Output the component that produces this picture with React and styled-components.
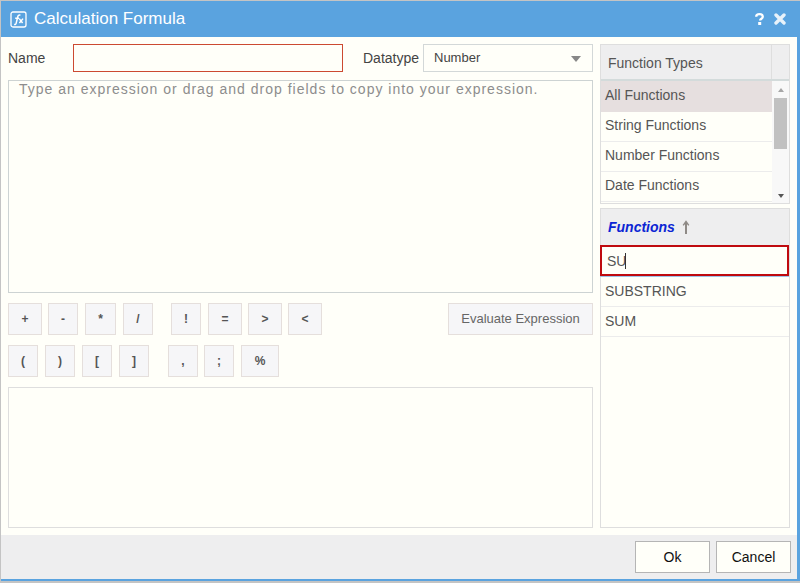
import React from "react";
import styled, { createGlobalStyle } from "styled-components";

const GlobalStyle = createGlobalStyle`
  html, body {
    margin: 0;
    padding: 0;
    background: #e4e4e4;
  }
  * {
    box-sizing: border-box;
  }
`;

const Frame = styled.div`
  width: 800px;
  height: 583px;
  padding: 1px 0 2px 1px;
  background: #c4c4c4;
  font-family: "Liberation Sans", Arial, sans-serif;
  overflow: hidden;
`;

const Dialog = styled.div`
  height: 580px;
  width: 799px;
  display: flex;
  flex-direction: column;
  background: #fffff9;
  border-right: 3px solid #5aa3df;
  border-bottom: 2px solid #5aa3df;
`;

const TitleBar = styled.div`
  height: 36px;
  flex: none;
  display: flex;
  align-items: center;
  padding: 0 11px 0 9px;
  background: #5aa3df;
  color: #fff;
`;

const TitleText = styled.span`
  margin-left: 7px;
  font-size: 17px;
  flex: 1;
`;

const TitleActions = styled.div`
  display: flex;
  align-items: center;
  gap: 10px;
`;

const Body = styled.div`
  flex: 1;
  display: flex;
  gap: 7px;
  padding: 7px 7px 7px 7px;
  min-height: 0;
`;

const LeftColumn = styled.div`
  width: 585px;
  display: flex;
  flex-direction: column;
`;

const NameRow = styled.div`
  display: flex;
  align-items: center;
  height: 28px;
  margin-bottom: 8px;
  font-size: 14px;
  color: #444;
`;

const NameLabel = styled.label`
  width: 65px;
`;

const NameInput = styled.input`
  width: 270px;
  height: 28px;
  border: 1px solid #cc4a32;
  background: #fffff9;
  outline: none;
`;

const DatatypeLabel = styled.label`
  margin-left: 20px;
  width: 60px;
`;

const Select = styled.div`
  width: 170px;
  height: 28px;
  display: flex;
  align-items: center;
  justify-content: space-between;
  padding: 0 11px 2px 10px;
  border: 1px solid #d3d8d8;
  font-size: 13px;
  color: #444;
`;

const Caret = styled.span`
  width: 0;
  height: 0;
  margin-top: 3px;
  border-left: 5.5px solid transparent;
  border-right: 5.5px solid transparent;
  border-top: 6px solid #888;
`;

const Expression = styled.div`
  height: 213px;
  padding: 0 10px;
  border: 1px solid #cdd3d3;
  font-size: 14px;
  letter-spacing: 1px;
  color: #8d8d8d;
`;

const ButtonRow = styled.div`
  display: flex;
  height: 32px;
  margin-top: 10px;
`;

const OpButton = styled.button`
  width: ${(p) => p.$w}px;
  height: 32px;
  margin-left: ${(p) => p.$ml}px;
  padding: 0;
  border: 1px solid #e5dfdc;
  background: #f6f6f8;
  font-family: "Liberation Sans", Arial, sans-serif;
  font-size: 12px;
  font-weight: bold;
  color: #555;
`;

const EvaluateButton = styled.button`
  margin-left: auto;
  width: 145px;
  height: 32px;
  padding: 0 0 2px;
  border: 1px solid #e5dfdc;
  background: #f6f6f8;
  font-family: "Liberation Sans", Arial, sans-serif;
  font-size: 13px;
  color: #666;
`;

const ResultBox = styled.div`
  flex: 1;
  margin-top: 10px;
  border: 1px solid #dedede;
`;

const RightColumn = styled.div`
  width: 190px;
  display: flex;
  flex-direction: column;
  font-size: 14px;
  color: #555;
`;

const TypesPanel = styled.div`
  height: 160px;
  flex: none;
  border: 1px solid #dedede;
  display: flex;
  flex-direction: column;
`;

const TypesHeader = styled.div`
  height: 36px;
  flex: none;
  display: flex;
  background: #eeeeef;
  border-bottom: 2px solid #d3dbdb;
`;

const TypesTitle = styled.div`
  width: 171px;
  padding: 2px 0 0 7px;
  display: flex;
  align-items: center;
  border-right: 1px solid #dedede;
`;

const TypesBody = styled.div`
  flex: 1;
  display: flex;
  min-height: 0;
`;

const TypesList = styled.div`
  width: 171px;
  overflow: hidden;
`;

const ListRow = styled.div`
  height: 30px;
  flex: none;
  display: flex;
  align-items: center;
  padding: 0 0 2px 4px;
  border-bottom: 1px solid #ececec;
`;

const TypeRow = styled(ListRow)`
  height: ${(p) => (p.$active ? 31 : 30)}px;
  padding-bottom: 3px;
  background: ${(p) => (p.$active ? "#e6dfdf" : "transparent")};
  border-bottom: ${(p) => (p.$active ? "none" : "1px solid #ececec")};
`;

const ScrollBar = styled.div`
  width: 17px;
  display: flex;
  flex-direction: column;
  align-items: center;
  padding: 7px 2px 0;
  background: #f8f8f8;
`;

const ArrowUp = styled.span`
  width: 0;
  height: 0;
  border-left: 3.5px solid transparent;
  border-right: 3.5px solid transparent;
  border-bottom: 4px solid #a6a6a6;
`;

const ArrowDown = styled.span`
  width: 0;
  height: 0;
  margin-top: auto;
  margin-bottom: 5px;
  border-left: 3.5px solid transparent;
  border-right: 3.5px solid transparent;
  border-top: 4px solid #555;
`;

const Thumb = styled.div`
  width: 13px;
  height: 51px;
  margin-top: 6px;
  background: #c1c1c1;
`;

const FunctionsPanel = styled.div`
  flex: 1;
  margin-top: 4px;
  border: 1px solid #dedede;
  display: flex;
  flex-direction: column;
`;

const FunctionsHeader = styled.div`
  height: 36px;
  flex: none;
  display: flex;
  align-items: center;
  gap: 7px;
  padding-left: 7px;
  background: #eeeeef;
`;

const FunctionsTitle = styled.span`
  font-weight: bold;
  font-style: italic;
  color: #0b25d4;
`;

const SearchBox = styled.div`
  height: 31px;
  flex: none;
  margin: 0 0 1px -1px;
  display: flex;
  align-items: center;
  padding: 1px 0 0 5px;
  border: 2px solid #bf0a0f;
  box-shadow: 0 1px 0 #9fc3e8;
`;

const CaretBar = styled.span`
  display: inline-block;
  width: 1px;
  height: 16px;
  margin-left: -1px;
  background: #333;
`;

const Footer = styled.div`
  height: 44px;
  flex: none;
  display: flex;
  align-items: center;
  justify-content: flex-end;
  gap: 6px;
  padding-right: 6px;
  background: #eeeeef;
`;

const FooterButton = styled.button`
  width: 75px;
  height: 32px;
  padding: 0;
  border: 1px solid #b5b5b5;
  background: #fffff9;
  font-family: "Liberation Sans", Arial, sans-serif;
  font-size: 14px;
  color: #111;
`;

const FxIcon = () => (
  <svg width="17" height="17" viewBox="0 0 17 17" fill="none">
    <rect x="1" y="1" width="15" height="15" rx="2" stroke="#fff" strokeWidth="1.3" />
    <path d="M10.4 4.2c-1.7-.5-2.4.2-2.7 1.6L6.2 12.2c-.3 1.2-1 1.5-2 1.1M5.2 7.2h3.8" stroke="#fff" strokeWidth="1.5" />
    <path d="M9.2 7.6l3.4 4.4M13 7.6l-3.6 4.4" stroke="#fff" strokeWidth="1.5" />
  </svg>
);

const firstRow = [
  { label: "+", w: 34, ml: 0 },
  { label: "-", w: 30, ml: 6 },
  { label: "*", w: 31, ml: 7 },
  { label: "/", w: 30, ml: 7 },
  { label: "!", w: 30, ml: 18 },
  { label: "=", w: 34, ml: 7 },
  { label: ">", w: 34, ml: 6 },
  { label: "<", w: 34, ml: 6 },
];
const secondRow = [
  { label: "(", w: 30, ml: 0 },
  { label: ")", w: 30, ml: 7 },
  { label: "[", w: 30, ml: 7 },
  { label: "]", w: 30, ml: 7 },
  { label: ",", w: 30, ml: 19 },
  { label: ";", w: 30, ml: 6 },
  { label: "%", w: 38, ml: 7 },
];
const functionTypes = ["String Functions", "Number Functions", "Date Functions"];

const App = () => {
  return (
    <>
      <GlobalStyle />
      <Frame>
        <Dialog>
          <TitleBar>
            <FxIcon />
            <TitleText>Calculation Formula</TitleText>
            <TitleActions>
              <svg width="9" height="12" viewBox="0 0 9 12" fill="none">
                <path d="M1.2 3.8C1.2 2 2.6 1.2 4.5 1.2s3.3.9 3.3 2.5c0 2.1-2.7 2-2.7 3.9" stroke="#fff" strokeWidth="2.3" />
                <rect x="3.2" y="9" width="3" height="3" fill="#fff" />
              </svg>
              <svg width="12" height="12" viewBox="0 0 12 12" fill="none">
                <path d="M2 2l8 8M10 2l-8 8" stroke="#e8f2fa" strokeWidth="3.4" strokeLinecap="round" />
              </svg>
            </TitleActions>
          </TitleBar>
          <Body>
            <LeftColumn>
              <NameRow>
                <NameLabel>Name</NameLabel>
                <NameInput />
                <DatatypeLabel>Datatype</DatatypeLabel>
                <Select>
                  Number
                  <Caret />
                </Select>
              </NameRow>
              <Expression>Type an expression or drag and drop fields to copy into your expression.</Expression>
              <ButtonRow>
                {firstRow.map((b) => (
                  <OpButton key={b.label} $w={b.w} $ml={b.ml}>{b.label}</OpButton>
                ))}
                <EvaluateButton>Evaluate Expression</EvaluateButton>
              </ButtonRow>
              <ButtonRow>
                {secondRow.map((b) => (
                  <OpButton key={b.label} $w={b.w} $ml={b.ml}>{b.label}</OpButton>
                ))}
              </ButtonRow>
              <ResultBox />
            </LeftColumn>
            <RightColumn>
              <TypesPanel>
                <TypesHeader>
                  <TypesTitle>Function Types</TypesTitle>
                </TypesHeader>
                <TypesBody>
                  <TypesList>
                    <TypeRow $active>All Functions</TypeRow>
                    {functionTypes.map((name) => (
                      <TypeRow key={name}>{name}</TypeRow>
                    ))}
                  </TypesList>
                  <ScrollBar>
                    <ArrowUp />
                    <Thumb />
                    <ArrowDown />
                  </ScrollBar>
                </TypesBody>
              </TypesPanel>
              <FunctionsPanel>
                <FunctionsHeader>
                  <FunctionsTitle>Functions</FunctionsTitle>
                  <svg width="8" height="15" viewBox="0 0 8 15" fill="none">
                    <path d="M4 14V3" stroke="#8f8a86" strokeWidth="2" />
                    <path d="M1.2 5.4L4 1.5l2.8 3.9" stroke="#8f8a86" strokeWidth="1.4" />
                  </svg>
                </FunctionsHeader>
                <SearchBox>
                  SU
                  <CaretBar />
                </SearchBox>
                <ListRow>SUBSTRING</ListRow>
                <ListRow>SUM</ListRow>
              </FunctionsPanel>
            </RightColumn>
          </Body>
          <Footer>
            <FooterButton>Ok</FooterButton>
            <FooterButton>Cancel</FooterButton>
          </Footer>
        </Dialog>
      </Frame>
    </>
  );
};

export default App;
